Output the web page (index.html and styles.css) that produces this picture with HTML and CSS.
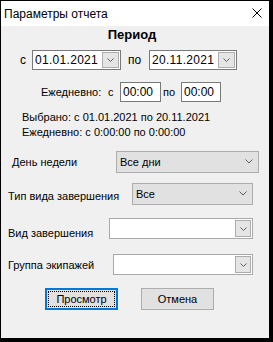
FILE: index.html
```html
<!DOCTYPE html>
<html lang="ru">
<head>
  <meta charset="UTF-8" />
  <title>Параметры отчета</title>
  <link rel="stylesheet" href="styles.css">
</head>
<body>
  <div class="window">
    <div class="titlebar">
      <span class="title">Параметры отчета</span>
      <svg class="close" width="10" height="10" viewBox="0 0 10 10">
        <path d="M0.5 0.5 L9.5 9.5 M9.5 0.5 L0.5 9.5" stroke="#000" stroke-width="1" fill="none"/>
      </svg>
    </div>

    <div class="content">
      <div class="heading">Период</div>

      <div class="row row-dates">
        <span class="lbl lbl-from">с</span>
        <div class="datebox box-d1">
          <span class="val">01.01.2021</span>
          <span class="dd-btn"><svg width="7" height="4" viewBox="0 0 7 4"><path d="M0.5 0.5 L3.5 3.5 L6.5 0.5" stroke="#606060" fill="none"/></svg></span>
        </div>
        <span class="lbl lbl-to">по</span>
        <div class="datebox box-d2">
          <span class="val">20.11.2021</span>
          <span class="dd-btn"><svg width="7" height="4" viewBox="0 0 7 4"><path d="M0.5 0.5 L3.5 3.5 L6.5 0.5" stroke="#606060" fill="none"/></svg></span>
        </div>
      </div>

      <div class="row row-times">
        <span class="lbl lbl-daily">Ежедневно:</span>
        <span class="lbl lbl-from2">с</span>
        <div class="timebox box-t1">00:00</div>
        <span class="lbl lbl-to2">по</span>
        <div class="timebox box-t2">00:00</div>
      </div>

      <div class="info">
        <div>Выбрано: с 01.01.2021 по 20.11.2021</div>
        <div>Ежедневно: с 0:00:00 по 0:00:00</div>
      </div>

      <div class="row row-field row-day">
        <span class="lbl lbl-day">День недели</span>
        <div class="combo combo-flat combo-day">
          <span class="val">Все дни</span>
          <svg class="chev" width="8" height="5" viewBox="0 0 8 5"><path d="M0.5 0.5 L4 4 L7.5 0.5" stroke="#606060" fill="none"/></svg>
        </div>
      </div>

      <div class="row row-field row-type">
        <span class="lbl lbl-type">Тип вида завершения</span>
        <div class="combo combo-flat combo-type">
          <span class="val">Все</span>
          <svg class="chev" width="8" height="5" viewBox="0 0 8 5"><path d="M0.5 0.5 L4 4 L7.5 0.5" stroke="#606060" fill="none"/></svg>
        </div>
      </div>

      <div class="row row-field row-kind">
        <span class="lbl lbl-kind">Вид завершения</span>
        <div class="combo combo-edit combo-kind">
          <span class="dd-btn"><svg width="7" height="4" viewBox="0 0 7 4"><path d="M0.5 0.5 L3.5 3.5 L6.5 0.5" stroke="#606060" fill="none"/></svg></span>
        </div>
      </div>

      <div class="row row-field row-crew">
        <span class="lbl lbl-crew">Группа экипажей</span>
        <div class="combo combo-edit combo-crew">
          <span class="dd-btn"><svg width="7" height="4" viewBox="0 0 7 4"><path d="M0.5 0.5 L3.5 3.5 L6.5 0.5" stroke="#606060" fill="none"/></svg></span>
        </div>
      </div>

      <div class="row row-buttons">
        <button class="btn btn-default"><span class="focus">Просмотр</span></button>
        <button class="btn">Отмена</button>
      </div>
    </div>
  </div>
</body>
</html>
```

FILE: styles.css
```css
* { box-sizing: border-box; }
html, body { margin: 0; padding: 0; background: #000; }

body {
  font-family: 'Liberation Sans', Arial, sans-serif;
  font-size: 11px;
  color: #000;
}

.window {
  width: 273px;
  height: 342px;
  background: #f0f0f0;
  border-style: solid;
  border-color: #000;
  border-width: 1px 4px 4px 1px;
}

/* title bar */
.titlebar {
  height: 25px;
  background: #fff;
  display: flex;
  align-items: center;
  padding-left: 3px;
  position: relative;
}
.title { font-size: 12px; margin-top: 1px; }
.close { position: absolute; left: 251px; top: 7px; }

.content { padding-top: 1px; }

.heading {
  height: 16px;
  line-height: 16px;
  font-size: 13px;
  font-weight: bold;
  text-align: center;
  padding-right: 6px;
}

.row { display: flex; align-items: center; }
.lbl { white-space: nowrap; }

/* dates */
.row-dates { margin-top: 7px; height: 20px; padding-left: 19px; }
.lbl-from { width: 12px; font-size: 12px; }
.lbl-to { width: 28px; padding-left: 7px; font-size: 12px; }
.datebox {
  height: 20px;
  background: #fff;
  border: 1px solid #7a7a7a;
  display: flex;
  align-items: center;
  justify-content: space-between;
  padding-left: 2px;
  padding-right: 1px;
  font-size: 12px;
  letter-spacing: 0.3px;
}
.box-d1 { width: 89px; }
.box-d2 { width: 88px; }

.dd-btn {
  width: 17px;
  height: 16px;
  background: #e5e5e5;
  border: 1px solid #acacac;
  display: flex;
  align-items: center;
  justify-content: center;
}

/* times */
.row-times { margin-top: 12px; height: 20px; padding-left: 40px; }
.lbl-daily { width: 67px; }
.lbl-from2 { width: 12px; }
.lbl-to2 { width: 20px; padding-left: 2px; }
.timebox {
  height: 20px;
  background: #fff;
  border: 1px solid #7a7a7a;
  padding-left: 2px;
  line-height: 18px;
  font-size: 12px;
}
.box-t1 { width: 41px; }
.box-t2 { width: 40px; }

/* selected summary */
.info {
  margin-top: 8px;
  padding-left: 21px;
  line-height: 15px;
}

/* combo rows */
.row-field { padding-left: 7px; }
.row-day { margin-top: 11px; height: 22px; padding-left: 11px; }
.row-type { margin-top: 10px; height: 22px; }
.row-kind { margin-top: 13px; height: 21px; align-items: flex-end; }
.row-crew { margin-top: 15px; height: 21px; }

.lbl-day { width: 104px; }
.lbl-type { width: 124px; margin-top: 4px; }
.lbl-kind { width: 101px; }
.lbl-crew { width: 105px; }

.combo {
  height: 100%;
  display: flex;
  align-items: center;
  justify-content: space-between;
}
.combo-flat {
  background: #e1e1e1;
  border: 1px solid #adadad;
  padding: 0 5px 0 3px;
}
.combo-flat .chev { margin-bottom: 1px; }
.combo-edit {
  background: #fff;
  border: 1px solid #a9a9a9;
  justify-content: flex-end;
  padding-right: 1px;
}
.combo-edit .dd-btn { height: 17px; width: 16px; }

.combo-day { width: 143px; }
.combo-type { width: 121px; }
.combo-kind { width: 144px; }
.combo-crew { width: 140px; }

/* buttons */
.row-buttons { margin-top: 13px; padding-left: 44px; gap: 23px; }
.btn {
  width: 73px;
  height: 22px;
  background: #e1e1e1;
  border: 1px solid #adadad;
  font-family: 'Liberation Sans', Arial, sans-serif;
  font-size: 11px;
  color: #000;
  padding: 0;
  margin: 0;
}
.btn-default {
  border: 2px solid #0078d7;
  padding: 1px;
}
.focus {
  display: flex;
  align-items: center;
  justify-content: center;
  height: 100%;
  border: 1px dotted #000;
}
```
